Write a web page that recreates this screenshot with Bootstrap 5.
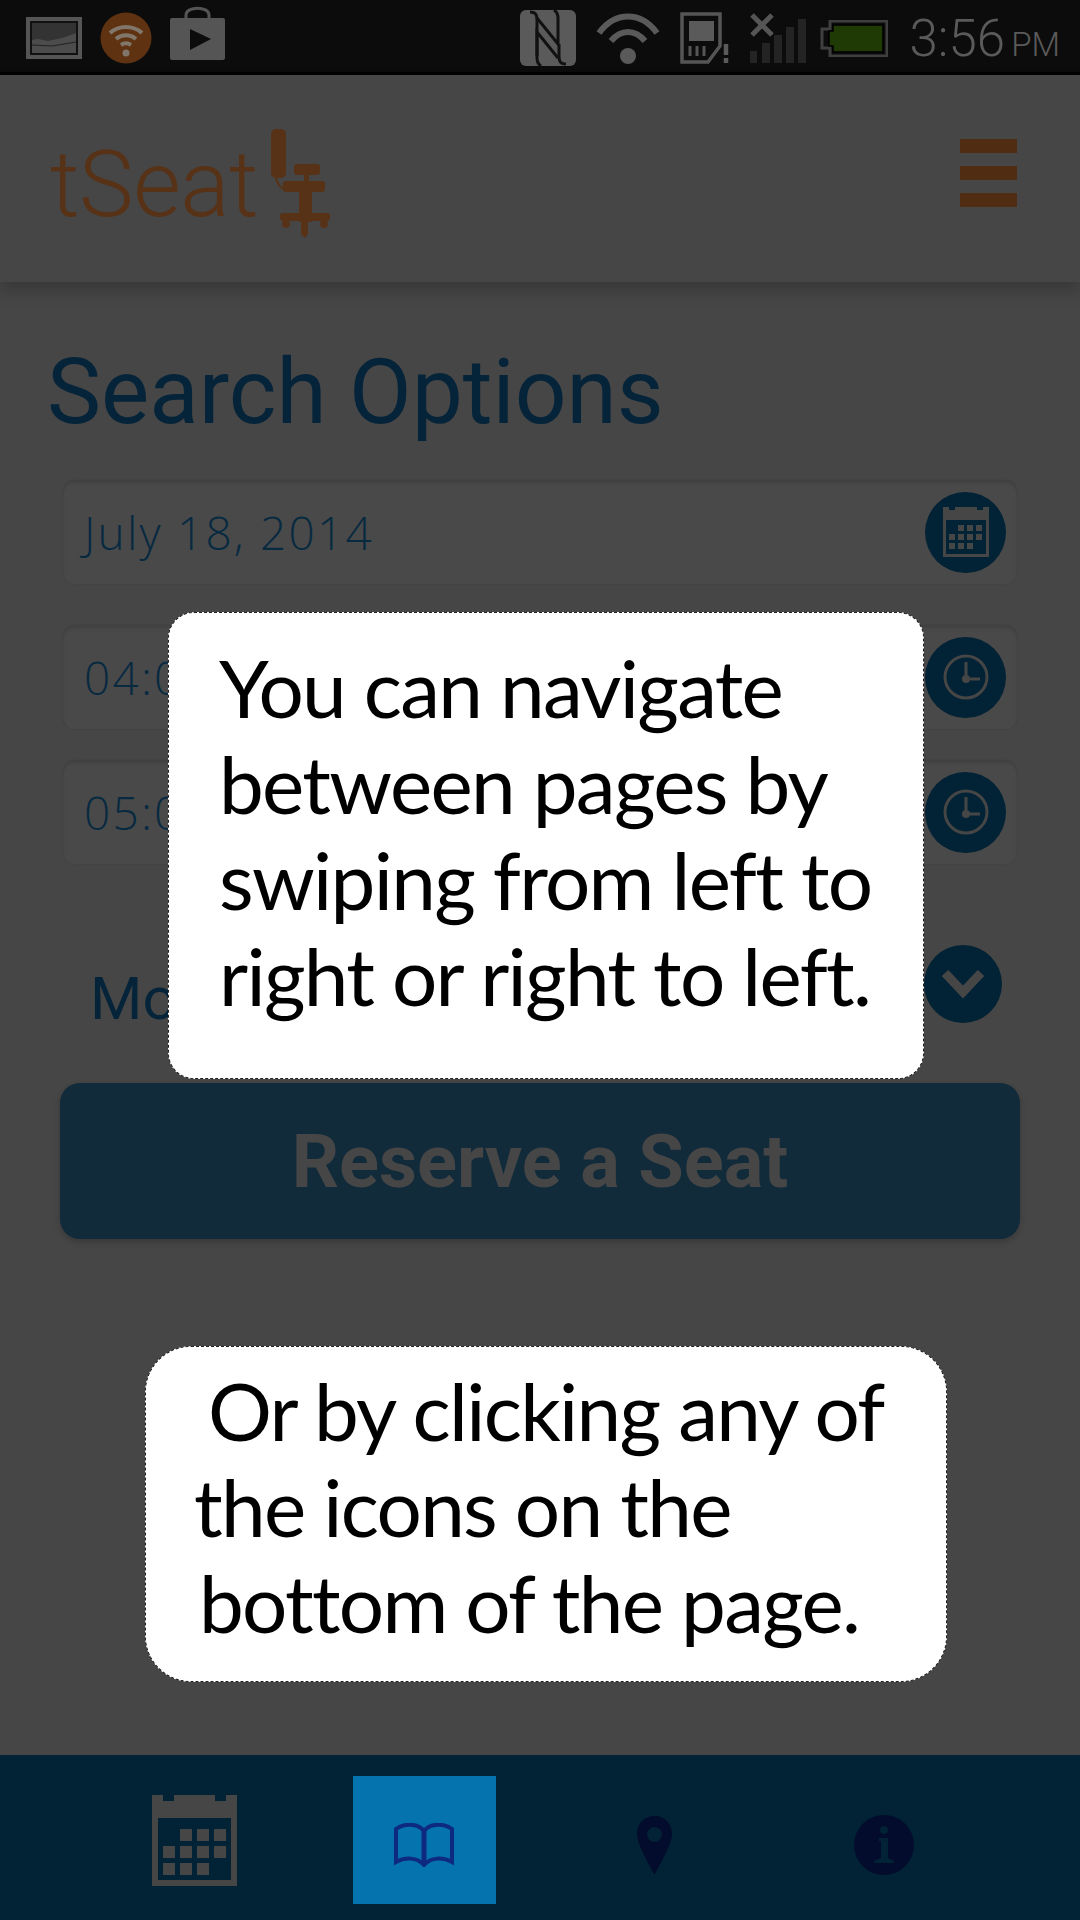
<!DOCTYPE html>
<html lang="en">
<head>
    <meta charset="UTF-8">
    <meta name="viewport" content="width=device-width, initial-scale=1.0">
    <title>tSeat</title>
    <link href="https://cdn.jsdelivr.net/npm/bootstrap@5.3.0/dist/css/bootstrap.min.css" rel="stylesheet">
    <style>
        html, body { width: 1080px; height: 1920px; overflow: hidden; }
        body {
            position: relative;
            background-color: #464646;
            font-family: Roboto, sans-serif;
            color: #05243a;
        }
        svg { display: block; flex-shrink: 0; }

        .status-bar {
            height: 75px;
            padding: 4px 20px 0 26px;
            background-color: #0c0c0c;
            border-bottom: 3px solid #000;
        }
        .status-left { gap: 18px; }
        .status-right { gap: 20px; }
        .bag-icon { margin-bottom: 10px; }
        .battery-icon { margin-left: -6px; }
        .clock-text { font-weight: 300; font-size: 51px; line-height: 1; color: #5a5a5a; margin-left: 2px; }
        .clock-text small { font-size: 33px; margin-left: 6px; }

        .top-bar {
            height: 207px;
            padding: 0 63px 0 50px;
            background-color: #464646;
            box-shadow: 0 8px 16px rgba(0, 0, 0, .22);
        }
        .brand-text { font-weight: 300; font-size: 92px; line-height: 1; color: #573216; letter-spacing: -.5px; }
        .brand { gap: 9px; margin-top: 12px; }
        .burger { gap: 13px; margin-bottom: 12px; }
        .burger span { display: block; width: 57px; height: 14px; background-color: #4f2c12; }

        .search-title { margin: 60px 0 38px 47px; font-size: 91px; font-weight: 400; line-height: 100px; color: #05243a; }
        .field {
            height: 104px;
            margin: 0 63px;
            padding: 0 11px 0 21px;
            background-color: #494949;
            border-radius: 12px;
            box-shadow: inset 0 3px 3px rgba(0, 0, 0, .1), 0 0 2px rgba(0, 0, 0, .12);
            font-family: "Open Sans", sans-serif;
            font-weight: 300;
            font-size: 46px;
            letter-spacing: 2.2px;
            color: #082a41;
        }
        .gap-first { margin-top: 41px; }
        .gap-second { margin-top: 31px; }
        .round-btn {
            width: 81px;
            height: 81px;
            border-radius: 50%;
            background-color: #022235;
        }
        .more-row { margin: 81px 78px 54px 90px; font-size: 60px; line-height: 1; color: #05243a; }
        .more-label { margin-top: 24px; }
        .more-row .round-btn { width: 78px; height: 78px; }
        .reserve-btn {
            display: block;
            width: 960px;
            height: 156px;
            margin-left: 60px;
            background-color: #122b3b;
            border: 0;
            border-radius: 20px;
            box-shadow: 0 3px 6px rgba(0, 0, 0, .2);
            font-family: Roboto, sans-serif;
            font-weight: 700;
            font-size: 74px;
            color: #464646;
        }

        .tab-bar { height: 165px; padding: 21px 80px 0 79px; background-color: #022235; }
        .tab-slot { width: 230px; height: 128px; }
        .tab-on { width: 143px; height: 128px; background-color: #0473ae; }
        .low-icon { margin-top: 10px; }

        .tip-box {
            position: absolute;
            background-color: #fff;
            border: 1px dashed #222;
            color: #000;
            font-family: Lato, sans-serif;
            font-size: 80px;
            letter-spacing: -1.7px;
            line-height: 96px;
            white-space: nowrap;
        }
        .tip-one { left: 168px; top: 612px; width: 756px; height: 467px; border-radius: 26px; padding: 26px 0 0 50px; }
        .tip-two { left: 145px; top: 1346px; width: 802px; height: 336px; border-radius: 46px; padding: 15px 0 0 48px; }
        .indent-a { padding-left: 14px; }
        .indent-b { padding-left: 5px; }
    </style>
</head>
<body class="d-flex flex-column">

<!-- status bar -->
<div class="status-bar d-flex justify-content-between align-items-center">
    <div class="status-left d-flex align-items-center">
        <svg width="56" height="42" viewBox="0 0 56 42"><rect width="56" height="42" fill="#555"/><rect x="4" y="4" width="48" height="34" fill="#111"/><rect x="6" y="6" width="44" height="30" fill="#4c4c4c"/><path d="M6 6h44v10l-14 5-14 3-10-2-6 1z" fill="#333"/><path d="M6 28l20 1 24-4" fill="none" stroke="#222" stroke-width="1"/></svg>
        <svg width="52" height="52" viewBox="0 0 52 52"><circle cx="26" cy="26" r="25.500" fill="#5f3312"/><g fill="none" stroke="#80766a" stroke-width="4"><path d="M10 21c9-8 23-8 32 0"/><path d="M16 27c6-5 14-5 20 0"/><path d="M21 33c3-2 7-2 10 0"/></g><circle cx="26" cy="41" r="3.500" fill="#80766a"/></svg>
        <svg width="55" height="54" viewBox="0 0 55 54" class="bag-icon"><path d="M16 13V9c0-9 23-9 23 0v4" fill="none" stroke="#555" stroke-width="3"/><rect y="12" width="55" height="42" rx="2" fill="#555"/><path d="M20 23l21 10-21 11z" fill="#0c0c0c"/></svg>
    </div>
    <div class="status-right d-flex align-items-center">
        <svg width="56" height="56" viewBox="0 0 56 56"><rect width="56" height="56" rx="6" fill="#5a5a5a"/><g fill="none" stroke="#111" stroke-width="3"><path d="M10 2c6 0 7 3 7 8v36"/><path d="M17 8l21 26 0-26c0-4-1-6-4-8"/><path d="M46 54c-6 0-7-3-7-8V34"/><path d="M38 48L17 22v26c0 4 1 6 4 8"/></g></svg>
        <svg width="64" height="52" viewBox="0 0 64 52"><g fill="none" stroke="#5a5a5a" stroke-width="6"><path d="M3 21c16-22 42-22 58 0"/><path d="M15 29c10-12 24-12 34 0"/></g><circle cx="32" cy="44" r="8" fill="#5a5a5a"/></svg>
        <svg width="50" height="52" viewBox="0 0 50 52"><path d="M2 2h38v32L28 50H2z" fill="none" stroke="#555" stroke-width="3.500"/><rect x="9" y="9" width="25" height="20" fill="#5a5a5a"/><path d="M10 34v10M17 34v10M24 34v10" stroke="#555" stroke-width="3"/><path d="M46 32v11M46 46v5" stroke="#5a5a5a" stroke-width="4.500"/></svg>
        <svg width="56" height="50" viewBox="0 0 56 50"><path d="M2 2l20 20M22 2L2 22" stroke="#555" stroke-width="5"/><g fill="#242424"><rect y="38" width="7" height="12"/><rect x="12" y="30" width="8" height="20"/><rect x="24" y="22" width="8" height="28"/><rect x="36" y="14" width="8" height="36"/><rect x="48" y="6" width="8" height="44"/></g></svg>
        <svg width="68" height="37" viewBox="0 0 68 37" class="battery-icon"><path d="M10 1h57v35H10v-8H2V9h8z" fill="none" stroke="#3f3f3f" stroke-width="3"/><path d="M13 5h50v27H13v-6H9V11h4z" fill="#1f3a04" stroke="#000" stroke-width="1.500"/></svg>
        <div class="clock-text">3:56<small>PM</small></div>
    </div>
</div>

<!-- header -->
<div class="top-bar d-flex justify-content-between align-items-center position-relative">
    <div class="brand d-flex align-items-center">
        <span class="brand-text">tSeat</span>
        <svg width="66" height="112" viewBox="0 0 66 112"><g fill="#573216"><rect x="4" y="0" width="15" height="49" rx="5"/><path d="M9 49c1 6 5 10 10 12" fill="none" stroke="#573216" stroke-width="2"/><rect x="27" y="35" width="26" height="11" rx="3"/><rect x="37" y="46" width="5" height="8"/><rect x="16" y="52" width="42" height="11" rx="3"/><rect x="32" y="63" width="13" height="30"/><rect x="13" y="84" width="50" height="8" rx="3"/><circle cx="19" cy="95" r="4"/><circle cx="57" cy="95" r="4"/><path d="M34 92h7v13l-3 4-4-4z"/></g></svg>
    </div>
    <div class="burger d-flex flex-column"><span></span><span></span><span></span></div>
</div>

<!-- search form -->
<h1 class="search-title">Search Options</h1>

<div class="field d-flex justify-content-between align-items-center">
    <span>July 18, 2014</span>
    <div class="round-btn d-flex justify-content-center align-items-center">
        <svg width="46" height="50" viewBox="0 0 46 50"><path d="M0 0h6v3h6V0h22v3h6V0h6v50H0zM3 13v34h40V13z" fill="#464646" fill-rule="evenodd"/><g fill="#464646"><rect x="15" y="18" width="6" height="6"/><rect x="24" y="18" width="6" height="6"/><rect x="33" y="18" width="6" height="6"/><rect x="6" y="27" width="6" height="6"/><rect x="15" y="27" width="6" height="6"/><rect x="24" y="27" width="6" height="6"/><rect x="33" y="27" width="6" height="6"/><rect x="6" y="36" width="6" height="6"/><rect x="15" y="36" width="6" height="6"/><rect x="24" y="36" width="6" height="6"/></g></svg>
    </div>
</div>
<div class="field gap-first d-flex justify-content-between align-items-center">
    <span>04:00 PM</span>
    <div class="round-btn d-flex justify-content-center align-items-center">
        <svg width="46" height="46" viewBox="0 0 46 46"><circle cx="23" cy="23" r="21" fill="none" stroke="#464646" stroke-width="3"/><path d="M23 8v17h14" fill="none" stroke="#464646" stroke-width="3"/><circle cx="23" cy="25" r="4" fill="#464646"/></svg>
    </div>
</div>
<div class="field gap-second d-flex justify-content-between align-items-center">
    <span>05:00 PM</span>
    <div class="round-btn d-flex justify-content-center align-items-center">
        <svg width="46" height="46" viewBox="0 0 46 46"><circle cx="23" cy="23" r="21" fill="none" stroke="#464646" stroke-width="3"/><path d="M23 8v17h14" fill="none" stroke="#464646" stroke-width="3"/><circle cx="23" cy="25" r="4" fill="#464646"/></svg>
    </div>
</div>

<div class="more-row d-flex justify-content-between align-items-start">
    <span class="more-label">More Options</span>
    <div class="round-btn d-flex justify-content-center align-items-center">
        <svg width="44" height="30" viewBox="0 0 44 30"><path d="M4 4l18 19L40 4" fill="none" stroke="#464646" stroke-width="9"/></svg>
    </div>
</div>

<button type="button" class="reserve-btn btn">Reserve a Seat</button>

<!-- bottom tabs -->
<nav class="tab-bar d-flex mt-auto">
    <div class="tab-slot d-flex justify-content-center align-items-center">
        <svg width="85" height="91" viewBox="0 0 85 91"><path d="M0 0h11v6h11V0h41v6h11V0h11v91H0zM6 23v62h73V23z" fill="#464646" fill-rule="evenodd"/><g fill="#464646"><rect x="28" y="34" width="12" height="12"/><rect x="45" y="34" width="12" height="12"/><rect x="62" y="34" width="12" height="12"/><rect x="11" y="51" width="12" height="12"/><rect x="28" y="51" width="12" height="12"/><rect x="45" y="51" width="12" height="12"/><rect x="62" y="51" width="12" height="12"/><rect x="11" y="68" width="12" height="12"/><rect x="28" y="68" width="12" height="12"/><rect x="45" y="68" width="12" height="12"/></g></svg>
    </div>
    <div class="tab-slot d-flex justify-content-center align-items-center">
        <div class="tab-on d-flex justify-content-center align-items-center">
            <svg width="60" height="44" viewBox="0 0 60 44" class="low-icon"><path d="M30 8C24 0 10 0 2 6v33c9-5 21-5 28 3 7-8 19-8 28-3V6C50 0 36 0 30 8z" fill="none" stroke="#0e2a80" stroke-width="4"/><path d="M30 7v34" stroke="#0e2a80" stroke-width="5"/></svg>
        </div>
    </div>
    <div class="tab-slot d-flex justify-content-center align-items-center">
        <svg width="35" height="59" viewBox="0 0 35 59" class="low-icon"><path d="M17.500 0C7 0 0 8 0 18c0 10 12 30 17.500 41C23 48 35 28 35 18 35 8 28 0 17.500 0zm0 11a7.500 7.500 0 1 1 0 15 7.500 7.500 0 0 1 0-15z" fill="#030c2c" fill-rule="evenodd"/></svg>
    </div>
    <div class="tab-slot d-flex justify-content-center align-items-center">
        <svg width="60" height="60" viewBox="0 0 60 60" class="low-icon"><circle cx="30" cy="30" r="30" fill="#030c2c"/><circle cx="30" cy="15" r="4" fill="#022235"/><path d="M25 23h9v20l6 3v2H20v-2l7-3V26h-2z" fill="#022235"/></svg>
    </div>
</nav>

<!-- coach marks -->
<div class="tip-box tip-one">You can navigate<br>between pages by<br>swiping from left to<br>right or right to left.</div>
<div class="tip-box tip-two"><span class="indent-a">Or by clicking any of</span><br>the icons on the<br><span class="indent-b">bottom of the page.</span></div>

<script src="https://cdn.jsdelivr.net/npm/bootstrap@5.3.0/dist/js/bootstrap.bundle.min.js"></script>
</body>
</html>
